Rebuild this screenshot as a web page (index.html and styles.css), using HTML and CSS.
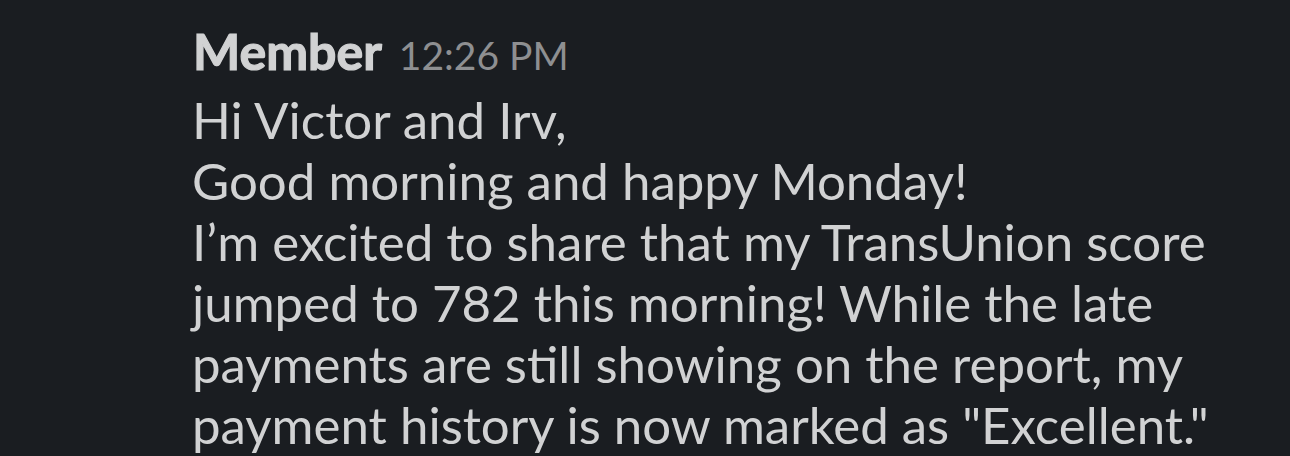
FILE: index.html
```
<!DOCTYPE html>
<html lang="en">
<head>
    <meta charset="UTF-8">
    <title>Message</title>
    <link rel="stylesheet" href="styles.css">
</head>
<body>
    <div class="message">
        <div class="message-header">
            <span class="sender">Member</span>
            <span class="timestamp">12:26 PM</span>
        </div>
        <div class="message-body">
            <p>Hi Victor and Irv,</p>
            <p>Good morning and happy Monday!</p>
            <p>I’m excited to share that my TransUnion score jumped to 782 this morning! While the late payments are still showing on the report, my payment history is now marked as "Excellent."</p>
        </div>
    </div>
</body>
</html>
```

FILE: styles.css
```
/* Dark chat view */
html, body {
    margin: 0;
    padding: 0;
    height: 100%;
    overflow: hidden;
    background: #1a1d21;
    font-family: Lato, "Noto Sans", sans-serif;
}

.message {
    padding: 21px 0 0 192px;
    width: 1050px;
    color: #d1d2d3;
}

/* Name and time */
.message-header {
    display: flex;
    align-items: baseline;
    gap: 17px;
    line-height: 61px;
}

.sender {
    font-size: 50px;
    font-weight: 700;
    -webkit-text-stroke: 1.2px #d1d2d3;
    padding-left: 1px;
}

.timestamp {
    font-size: 39px;
    color: #8e8f91;
}

.message-body {
    font-size: 51px;
    line-height: 61px;
    margin-top: 3px;
}

.message-body p {
    margin: 0;
}
```
